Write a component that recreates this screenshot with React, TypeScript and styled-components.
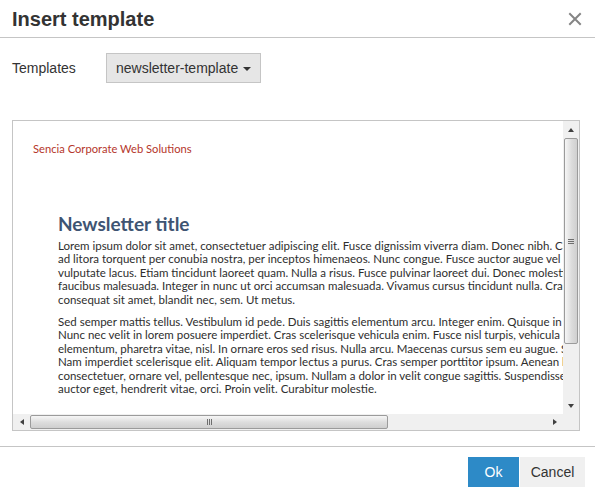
import { createGlobalStyle } from "styled-components";
import styled from "styled-components";

const GlobalStyle = createGlobalStyle`
  html, body {
    margin: 0;
    padding: 0;
    background: #ffffff;
  }
  body {
    font-family: "Liberation Sans", Arial, sans-serif;
    color: #333333;
  }
`;

const paragraphOne = [
  "Lorem ipsum dolor sit amet, consectetuer adipiscing elit. Fusce dignissim viverra diam. Donec nibh. Class aptent",
  "ad litora torquent per conubia nostra, per inceptos himenaeos. Nunc congue. Fusce auctor augue vel nibh",
  "vulputate lacus. Etiam tincidunt laoreet quam. Nulla a risus. Fusce pulvinar laoreet dui. Donec molestie",
  "faucibus malesuada. Integer in nunc ut orci accumsan malesuada. Vivamus cursus tincidunt nulla. Cras",
  "consequat sit amet, blandit nec, sem. Ut metus.",
];

const paragraphTwo = [
  "Sed semper mattis tellus. Vestibulum id pede. Duis sagittis elementum arcu. Integer enim. Quisque in mauris",
  "Nunc nec velit in lorem posuere imperdiet. Cras scelerisque vehicula enim. Fusce nisl turpis, vehicula in",
  "elementum, pharetra vitae, nisl. In ornare eros sed risus. Nulla arcu. Maecenas cursus sem eu augue. Sed",
  "Nam imperdiet scelerisque elit. Aliquam tempor lectus a purus. Cras semper porttitor ipsum. Aenean lorem",
  "consectetuer, ornare vel, pellentesque nec, ipsum. Nullam a dolor in velit congue sagittis. Suspendisse",
  "auctor eget, hendrerit vitae, orci. Proin velit. Curabitur molestie.",
];

export default function App() {
  return (
    <>
      <GlobalStyle />
      <Dialog>
        <Header>
          <Title>Insert template</Title>
          <CloseButton aria-label="Close">
            <svg width="14" height="14" viewBox="0 0 14 14">
              <path
                d="M2 2 L12 12 M12 2 L2 12"
                stroke="#858585"
                strokeWidth="2"
                strokeLinecap="square"
              />
            </svg>
          </CloseButton>
        </Header>

        <Body>
          <FormRow>
            <Label>Templates</Label>
            <SelectButton>
              newsletter-template
              <Caret />
            </SelectButton>
          </FormRow>

          <PreviewFrame>
            <ScrollArea>
              <Document>
                <Company>Sencia Corporate Web Solutions</Company>
                <Article>
                  <NewsTitle>Newsletter title</NewsTitle>
                  <Paragraph>
                    {paragraphOne.map((line) => (
                      <Line key={line}>{line}</Line>
                    ))}
                  </Paragraph>
                  <Paragraph>
                    {paragraphTwo.map((line) => (
                      <Line key={line}>{line}</Line>
                    ))}
                  </Paragraph>
                </Article>
              </Document>

              <VerticalBar>
                <ArrowCell>
                  <Arrow $dir="up" />
                </ArrowCell>
                <VerticalTrack>
                  <VerticalThumb>
                    <VerticalGrip>
                      <span />
                      <span />
                      <span />
                    </VerticalGrip>
                  </VerticalThumb>
                </VerticalTrack>
                <ArrowCell>
                  <Arrow $dir="down" />
                </ArrowCell>
              </VerticalBar>

              <HorizontalBar>
                <ArrowCell>
                  <Arrow $dir="left" />
                </ArrowCell>
                <HorizontalTrack>
                  <HorizontalThumb>
                    <HorizontalGrip>
                      <span />
                      <span />
                      <span />
                    </HorizontalGrip>
                  </HorizontalThumb>
                </HorizontalTrack>
                <ArrowCell>
                  <Arrow $dir="right" />
                </ArrowCell>
              </HorizontalBar>

              <Corner />
            </ScrollArea>
          </PreviewFrame>
        </Body>

        <Footer>
          <PrimaryButton>Ok</PrimaryButton>
          <SecondaryButton>Cancel</SecondaryButton>
        </Footer>
      </Dialog>
    </>
  );
}

const Dialog = styled.div`
  width: 595px;
  height: 496px;
  background: #ffffff;
  display: flex;
  flex-direction: column;
  overflow: hidden;
`;

const Header = styled.div`
  flex-shrink: 0;
  height: 37px;
  border-bottom: 1px solid #c5c5c5;
  padding: 0 10px 0 12px;
  display: flex;
  align-items: center;
  justify-content: space-between;
`;

const Title = styled.h1`
  margin: 0;
  font-size: 20px;
  font-weight: bold;
  color: #333333;
  line-height: 24px;
`;

const CloseButton = styled.button`
  border: 0;
  background: transparent;
  padding: 0;
  width: 16px;
  height: 16px;
  margin-right: 2px;
  display: flex;
  align-items: center;
  justify-content: center;
`;

const Body = styled.div`
  flex-shrink: 0;
  padding: 15px 16px 0 12px;
  display: flex;
  flex-direction: column;
`;

const FormRow = styled.div`
  display: flex;
  align-items: center;
  height: 30px;
  margin-bottom: 37px;
`;

const Label = styled.label`
  width: 94px;
  font-size: 14px;
  color: #333333;
`;

const SelectButton = styled.button`
  height: 30px;
  padding: 0 9px 0 9px;
  border: 1px solid #c5c5c5;
  background: #e6e6e6;
  font-family: "Liberation Sans", Arial, sans-serif;
  font-size: 14px;
  color: #333333;
  display: flex;
  align-items: center;
  gap: 5px;
`;

const Caret = styled.span`
  width: 0;
  height: 0;
  border-left: 4px solid transparent;
  border-right: 4px solid transparent;
  border-top: 4px solid #333333;
  margin-top: 1px;
`;

const PreviewFrame = styled.div`
  width: 568px;
  height: 311px;
  box-sizing: border-box;
  border: 1px solid #c5c5c5;
`;

const ScrollArea = styled.div`
  width: 100%;
  height: 100%;
  display: grid;
  grid-template-columns: 1fr 16px;
  grid-template-rows: 1fr 16px;
`;

const Document = styled.div`
  overflow: hidden;
  background: #ffffff;
  padding: 21px 0 0 20px;
  font-family: Lato, "Liberation Sans", sans-serif;
  font-size: 11.5px;
  line-height: 13.5px;
  color: #2e2e2e;
`;

const Company = styled.div`
  color: #b5362b;
  font-size: 11.2px;
  white-space: nowrap;
`;

const Article = styled.div`
  margin-top: 57px;
  padding-left: 25px;
`;

const NewsTitle = styled.h2`
  margin: 0 0 4px;
  font-size: 19px;
  line-height: 22px;
  font-weight: bold;
  color: #3e5472;
  white-space: nowrap;
`;

const Paragraph = styled.p`
  margin: 0 0 8.5px;
`;

const Line = styled.span`
  display: block;
  white-space: nowrap;
`;

const VerticalBar = styled.div`
  background: #f0f0f0;
  display: grid;
  grid-template-rows: 17px 1fr 17px;
`;

const HorizontalBar = styled.div`
  background: #f0f0f0;
  display: grid;
  grid-template-columns: 17px 1fr 17px;
`;

const Corner = styled.div`
  background: #f0f0f0;
`;

const ArrowCell = styled.div`
  display: flex;
  align-items: center;
  justify-content: center;
`;

const Arrow = styled.span<{ $dir: "up" | "down" | "left" | "right" }>`
  width: 0;
  height: 0;
  ${({ $dir }) =>
    $dir === "up"
      ? "border-left: 3.5px solid transparent; border-right: 3.5px solid transparent; border-bottom: 4px solid #404040;"
      : $dir === "down"
        ? "border-left: 3.5px solid transparent; border-right: 3.5px solid transparent; border-top: 4px solid #404040;"
        : $dir === "left"
          ? "border-top: 3.5px solid transparent; border-bottom: 3.5px solid transparent; border-right: 4px solid #404040;"
          : "border-top: 3.5px solid transparent; border-bottom: 3.5px solid transparent; border-left: 4px solid #404040;"}
`;

const VerticalTrack = styled.div`
  padding: 0 1px;
`;

const HorizontalTrack = styled.div`
  padding: 1px 0;
`;

const VerticalThumb = styled.div`
  height: 206px;
  box-sizing: border-box;
  border: 1px solid #9b9b9b;
  border-radius: 2px;
  background: linear-gradient(to right, #f6f6f6, #dcdcdc 55%, #cfcfcf);
  display: flex;
  align-items: center;
  justify-content: center;
`;

const HorizontalThumb = styled.div`
  width: 358px;
  height: 100%;
  box-sizing: border-box;
  border: 1px solid #9b9b9b;
  border-radius: 2px;
  background: linear-gradient(to bottom, #f6f6f6, #dcdcdc 55%, #cfcfcf);
  display: flex;
  align-items: center;
  justify-content: center;
`;

const VerticalGrip = styled.div`
  display: flex;
  flex-direction: column;
  gap: 1px;
  span {
    display: block;
    width: 6px;
    height: 1px;
    background: #6e6e6e;
  }
`;

const HorizontalGrip = styled.div`
  display: flex;
  gap: 1px;
  span {
    display: block;
    width: 1px;
    height: 6px;
    background: #6e6e6e;
  }
`;

const Footer = styled.div`
  flex-shrink: 0;
  height: 49px;
  margin-top: 15px;
  border-top: 1px solid #c5c5c5;
  padding: 10px 10px 0;
  box-sizing: content-box;
  display: flex;
  justify-content: flex-end;
  align-items: flex-start;
`;

const PrimaryButton = styled.button`
  width: 51px;
  height: 30px;
  border: 0;
  background: #2d8ac7;
  color: #ffffff;
  font-family: "Liberation Sans", Arial, sans-serif;
  font-size: 14px;
  padding: 0;
`;

const SecondaryButton = styled.button`
  width: 65px;
  height: 30px;
  border: 0;
  margin-left: 1px;
  background: #f0f0f0;
  color: #333333;
  font-family: "Liberation Sans", Arial, sans-serif;
  font-size: 14px;
  padding: 0;
`;
